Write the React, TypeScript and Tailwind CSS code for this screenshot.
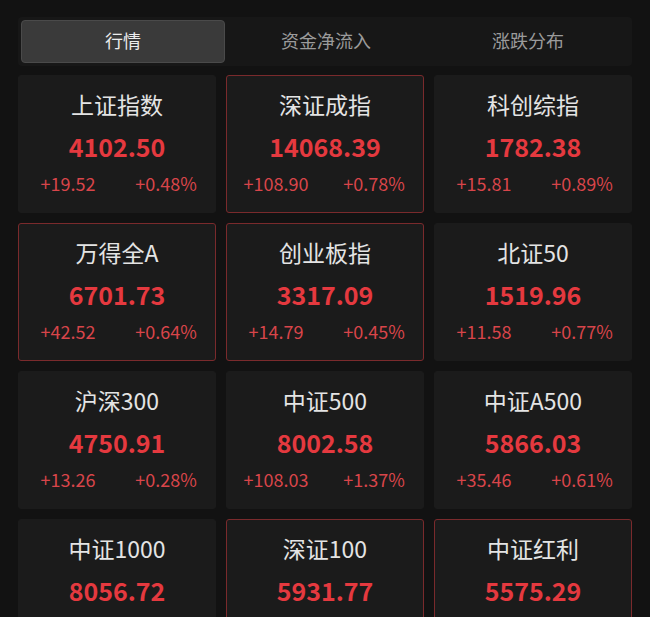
import { useState } from 'react';

interface IndexQuote {
  name: string;
  price: string;
  change: string;
  percent: string;
  highlighted?: boolean;
}

const tabs = ['行情', '资金净流入', '涨跌分布'];

const quotes: IndexQuote[] = [
  { name: '上证指数', price: '4102.50', change: '+19.52', percent: '+0.48%' },
  { name: '深证成指', price: '14068.39', change: '+108.90', percent: '+0.78%', highlighted: true },
  { name: '科创综指', price: '1782.38', change: '+15.81', percent: '+0.89%' },
  { name: '万得全A', price: '6701.73', change: '+42.52', percent: '+0.64%', highlighted: true },
  { name: '创业板指', price: '3317.09', change: '+14.79', percent: '+0.45%', highlighted: true },
  { name: '北证50', price: '1519.96', change: '+11.58', percent: '+0.77%' },
  { name: '沪深300', price: '4750.91', change: '+13.26', percent: '+0.28%' },
  { name: '中证500', price: '8002.58', change: '+108.03', percent: '+1.37%' },
  { name: '中证A500', price: '5866.03', change: '+35.46', percent: '+0.61%' },
  { name: '中证1000', price: '8056.72', change: '+22.10', percent: '+0.27%' },
  { name: '深证100', price: '5931.77', change: '+46.85', percent: '+0.80%', highlighted: true },
  { name: '中证红利', price: '5575.29', change: '+12.34', percent: '+0.22%', highlighted: true },
];

function QuoteCard({ quote }: { quote: IndexQuote }) {
  return (
    <div
      className={`flex h-[138px] flex-col items-center rounded-[3px] bg-[#1b1b1b] pt-[12px] ${
        quote.highlighted ? 'border border-[#7a2a2c]' : 'border border-[#1b1b1b]'
      }`}
    >
      <p className="text-[23px] leading-[32px] text-[#e4e4e4]">{quote.name}</p>
      <p className="mt-[9px] text-[25px] font-semibold leading-[34px] text-[#e5393f]">{quote.price}</p>
      <div className="mt-[3px] grid w-full grid-cols-2 text-center text-[18px] leading-[34px] text-[#d8454a]">
        <span>{quote.change}</span>
        <span>{quote.percent}</span>
      </div>
    </div>
  );
}

export default function App() {
  const [active, setActive] = useState(0);

  return (
    <div
      className="min-h-screen bg-[#121212] px-[18px] pt-[17px]"
      style={{ fontFamily: '"Noto Sans CJK SC", "Noto Sans", sans-serif' }}
    >
      <div className="flex h-[49px] rounded-[4px] bg-[#171717] p-[3px]">
        {tabs.map((tab, index) => (
          <button
            key={tab}
            onClick={() => setActive(index)}
            className={`flex-1 rounded-[4px] pb-[2px] text-[18px] ${
              active === index
                ? 'border border-[#4a4a4a] bg-[#3a3a3a] text-[#ececec]'
                : 'text-[#9b9b9b]'
            }`}
          >
            {tab}
          </button>
        ))}
      </div>

      <div className="mt-[9px] grid grid-cols-3 gap-[10px]">
        {quotes.map((quote) => (
          <QuoteCard key={quote.name} quote={quote} />
        ))}
      </div>
    </div>
  );
}
